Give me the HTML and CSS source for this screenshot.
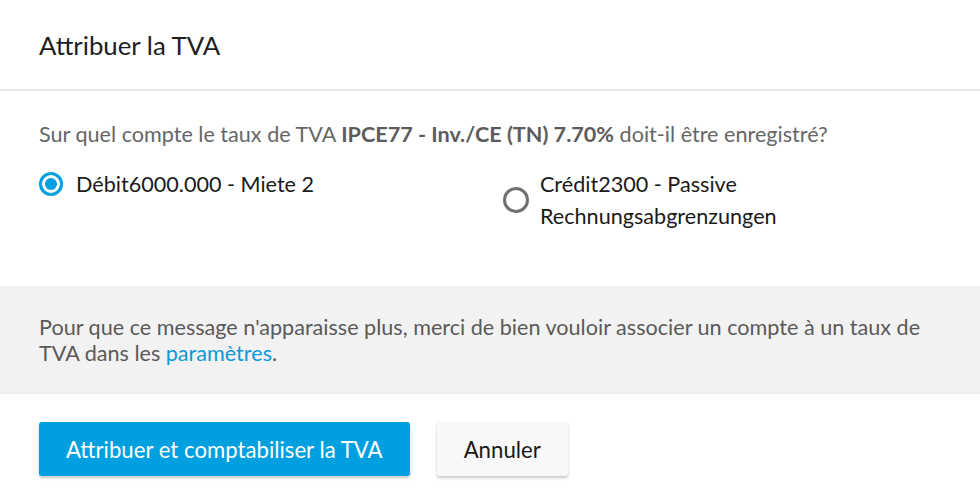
FILE: index.html
```html
<!DOCTYPE html>
<html lang="fr">
<head>
<meta charset="utf-8">
<title>Attribuer la TVA</title>
<link rel="stylesheet" href="styles.css">
</head>
<body>
<div class="dialog">
  <div class="dialog-header">
    <h1 class="dialog-title">Attribuer la TVA</h1>
  </div>
  <div class="dialog-body">
    <p class="question">Sur quel compte le taux de TVA <strong>IPCE77 - Inv./CE (TN) 7.70%</strong> doit-il être enregistré?</p>
    <div class="options">
      <label class="option">
        <span class="radio radio-checked"></span>
        <span class="option-label">Débit6000.000 - Miete 2</span>
      </label>
      <label class="option option-center">
        <span class="radio"></span>
        <span class="option-label">Crédit2300 - Passive<br>Rechnungsabgrenzungen</span>
      </label>
    </div>
  </div>
  <div class="notice">
    <p class="notice-text">Pour que ce message n'apparaisse plus, merci de bien vouloir associer un compte à un taux de TVA dans les <a href="#" class="link">paramètres</a>.</p>
  </div>
  <div class="dialog-footer">
    <button class="btn btn-primary">Attribuer et comptabiliser la TVA</button>
    <button class="btn btn-secondary">Annuler</button>
  </div>
</div>
</body>
</html>
```

FILE: styles.css
```css
* { box-sizing: border-box; }
html, body {
  margin: 0;
  padding: 0;
  background: #ffffff;
  font-family: Lato, "Noto Sans", sans-serif;
}
.dialog {
  width: 980px;
  height: 502px;
  overflow: hidden;
}
.dialog-header {
  height: 91px;
  padding: 0 39px;
  display: flex;
  align-items: center;
  border-bottom: 2px solid #e8e8e8;
}
.dialog-title {
  margin: 0;
  font-size: 25.8px;
  font-weight: 400;
  color: #1e1e1e;
}
.dialog-body {
  padding: 30px 39px 54px;
}
.question {
  margin: 0;
  font-size: 21.6px;
  line-height: 27px;
  color: #666666;
}
.question strong {
  font-weight: 700;
  color: #5c5c5c;
}
.options {
  margin-top: 20px;
  display: grid;
  grid-template-columns: 463px 1fr;
}
.option {
  display: flex;
  align-items: flex-start;
  gap: 12px;
}
.option-center {
  align-items: center;
}
.option-label {
  font-size: 21.6px;
  line-height: 32px;
  color: #1a1a1a;
}
.radio {
  flex: none;
  width: 24px;
  height: 24px;
  border-radius: 50%;
  border: 3px solid #707070;
  background: #fff;
  margin-top: 4px;
  position: relative;
}
.option-center .radio { margin-top: 0; width: 26px; height: 26px; margin-left: 1px; }
.option-center { gap: 11px; }
.radio-checked {
  border-color: #009fdf;
}
.radio-checked::after {
  content: "";
  position: absolute;
  left: 3px;
  top: 3px;
  width: 12px;
  height: 12px;
  border-radius: 50%;
  background: #009fdf;
}
.option:first-child { gap: 13px; }
.notice {
  background: #f2f2f2;
  padding: 28px 39px 27px;
  border-bottom: 1px solid #ebebeb;
}
.notice-text {
  margin: 0;
  font-size: 21.6px;
  line-height: 26px;
  color: #5a5a5a;
}
.link {
  display: inline-block;
  color: #0a9ad6;
  text-decoration: none;
}
.dialog-footer {
  padding: 28px 39px;
  display: flex;
  gap: 27px;
}
.btn {
  height: 54px;
  border-radius: 3px;
  font-family: Lato, "Noto Sans", sans-serif;
  font-size: 22.2px;
  padding: 0 27px;
  border: none;
  box-shadow: 0 2px 3px rgba(0, 0, 0, 0.22);
  cursor: pointer;
}
.btn-primary {
  background: #009fdf;
  color: #ffffff;
}
.btn-secondary {
  background: #f8f8f8;
  color: #1a1a1a;
  padding: 0 27px;
}
```
